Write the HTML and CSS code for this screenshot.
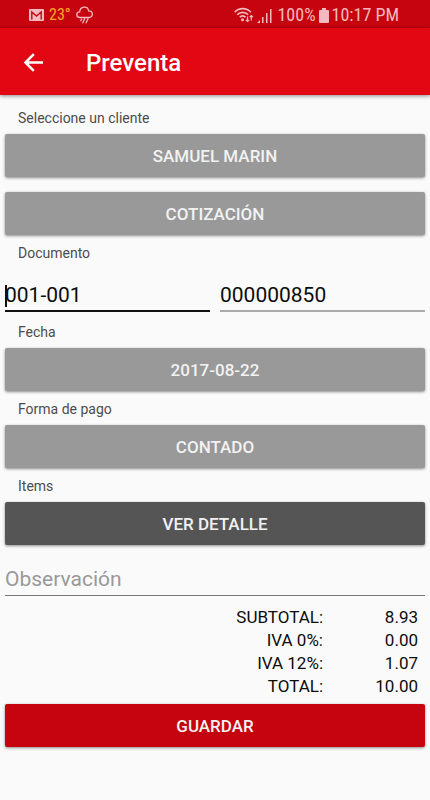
FILE: index.html
```html
<!DOCTYPE html>
<html lang="es">
<head>
<meta charset="utf-8">
<meta name="viewport" content="width=device-width, initial-scale=1">
<title>Preventa</title>
<link rel="stylesheet" href="styles.css">
</head>
<body>
<div class="status">
  <div class="status-group">
    <svg width="15" height="12" viewBox="0 0 15 12" aria-hidden="true"><rect width="15" height="12" rx="1" fill="#f3b9be"/><path d="M2.800 10.500V3L7.500 7l4.700-4v7.500" fill="none" stroke="#c5040f" stroke-width="1.400"/></svg>
    <span class="temp">23°</span>
    <svg width="17" height="18" viewBox="0 0 17 18" fill="none" stroke="#f3b9be" stroke-width="1.300" stroke-linecap="round" aria-hidden="true"><path d="M4 11.500C-.2 11.300-.2 6 3.700 5.800 4 .2 11.800-.6 12.600 4.800 17.600 4.600 17.500 11.500 13 11.500zM5.500 13.200l-.7 1.500M8.700 12.800l-1.900 4M12 12.800l-1.900 4"/></svg>
  </div>
  <div class="status-group status-right">
    <svg width="20" height="16" viewBox="0 0 20 16" fill="none" stroke="#f3b9be" stroke-width="1.700" aria-hidden="true"><path d="M.7 5.200C5 .4 12.500.4 16.800 5.200M3.200 7.800c3-3.300 8-3.300 11 0M5.800 10.200c1.500-1.800 4.200-1.800 5.700 0"/><circle cx="8.500" cy="12.800" r="1.500" fill="#f3b9be" stroke="none"/><path d="M13.500 9.500v5M11.800 12.800l1.700 1.700 1.700-1.700M17.300 13.500v-5M15.600 10.200l1.700-1.700 1.700 1.700" stroke-width="1.200"/></svg>
    <svg class="signal" width="15" height="15" viewBox="0 0 15 15" fill="#f3b9be" aria-hidden="true"><path d="M0 15l3-3v3zM5 9h1.500v6H5zM9 5h1.500v10H9zM13 1h1.500v14H13z"/></svg>
    <span>100%</span>
    <svg width="10" height="15" viewBox="0 0 10 15" fill="#f3b9be" aria-hidden="true"><path d="M3 0h4v2h2q1 0 1 1v11q0 1-1 1H1q-1 0-1-1V3q0-1 1-1h2z"/></svg>
    <span>10:17 PM</span>
  </div>
</div>
<header class="bar">
  <button class="back" type="button" aria-label="Atrás"><svg width="20" height="20" viewBox="0 0 20 20" fill="none" stroke="#fff" stroke-width="2.500" aria-hidden="true"><path d="M20 9.500H3M10.800 1.200L2.500 9.500l8.300 8.300"/></svg></button>
  <h1>Preventa</h1>
</header>
<main>
  <form>
    <label class="label" for="cliente">Seleccione un cliente</label>
    <button class="btn" id="cliente" type="button">SAMUEL MARIN</button>
    <button class="btn spaced" type="button">COTIZACIÓN</button>
    <label class="label" for="serie">Documento</label>
    <div class="pair">
      <div class="field focused"><input id="serie" type="text" value="001-001"><span class="caret"></span></div>
      <div class="field"><input type="text" value="000000850" aria-label="Número de documento"></div>
    </div>
    <label class="label" for="fecha">Fecha</label>
    <button class="btn" id="fecha" type="button">2017-08-22</button>
    <label class="label" for="pago">Forma de pago</label>
    <button class="btn" id="pago" type="button">CONTADO</button>
    <label class="label" for="items">Items</label>
    <button class="btn dark" id="items" type="button">VER DETALLE</button>
    <div class="field note"><input type="text" placeholder="Observación" aria-label="Observación"></div>
    <table class="totals">
      <tbody>
        <tr><th scope="row">SUBTOTAL:</th><td>8.93</td></tr>
        <tr><th scope="row">IVA 0%:</th><td>0.00</td></tr>
        <tr><th scope="row">IVA 12%:</th><td>1.07</td></tr>
        <tr><th scope="row">TOTAL:</th><td>10.00</td></tr>
      </tbody>
    </table>
    <button class="btn save" type="submit">GUARDAR</button>
  </form>
</main>
</body>
</html>
```
FILE: styles.css
```css
* { box-sizing: border-box; }
body {
  margin: 0;
  min-height: 100vh;
  background: #fafafa;
  color: #0c0c0c;
  font-family: Roboto, "Liberation Sans", sans-serif;
}
button, input { font-family: inherit; }
svg { display: block; flex: none; }
.status {
  display: flex;
  justify-content: space-between;
  align-items: center;
  height: 28px;
  padding: 2px 31px 0 29px;
  background: #c5040f;
  color: #f3b9be;
  font-family: "Roboto Condensed", Roboto, sans-serif;
  font-size: 18px;
  line-height: 24px;
}
.status-group { display: flex; align-items: center; gap: 5px; }
.status-right { gap: 3px; }
.signal { margin-right: 2px; }
.temp { color: #fbab26; font-size: 16px; }
.bar {
  position: relative;
  display: flex;
  align-items: center;
  height: 67px;
  padding: 2px 23px 0;
  background: #e30613;
  box-shadow: 0 1px 4px rgba(0, 0, 0, .45);
}
.back { padding: 0; border: 0; background: none; }
h1 {
  margin: 0 0 0 43px;
  color: #fff;
  font-size: 24px;
  font-weight: 500;
  line-height: 32px;
}
main { padding: 5px 5px 20px; }
.label {
  display: block;
  padding: 2px 0 0 13px;
  color: #4c4c4c;
  font-size: 14px;
  line-height: 32px;
}
.btn {
  display: block;
  width: 100%;
  height: 43px;
  padding: 0;
  border: 0;
  border-radius: 2px;
  background: #999;
  color: #f2f2f2;
  font-size: 17px;
  font-weight: 500;
  box-shadow: 0 1px 3px rgba(0, 0, 0, .45);
}
.spaced { margin-top: 15px; }
.dark { background: #555; }
.save { margin-top: 6px; background: #c5040f; }
.pair { display: grid; grid-template-columns: 1fr 1fr; gap: 10px; }
.field { position: relative; padding-bottom: 2px; }
.field input {
  display: block;
  width: 100%;
  height: 43px;
  padding: 10px 0 0;
  border: 0;
  border-bottom: 2px solid #aaa;
  border-radius: 0;
  outline: 0;
  background: none;
  color: #0c0c0c;
  font-size: 21px;
}
.focused input { border-bottom-color: #111; }
.caret {
  position: absolute;
  left: 0;
  top: 16px;
  width: 2px;
  height: 22px;
  background: #111;
}
.note { padding: 8px 0 10px; }
.note input { border-bottom: 1px solid #777; }
.note input::placeholder { color: #999; opacity: 1; }
.totals { width: 100%; border-collapse: collapse; }
.totals th, .totals td {
  padding: 0;
  font-size: 17px;
  font-weight: 400;
  line-height: 23px;
  text-align: right;
}
.totals td { width: 102px; padding-right: 7px; }
```
